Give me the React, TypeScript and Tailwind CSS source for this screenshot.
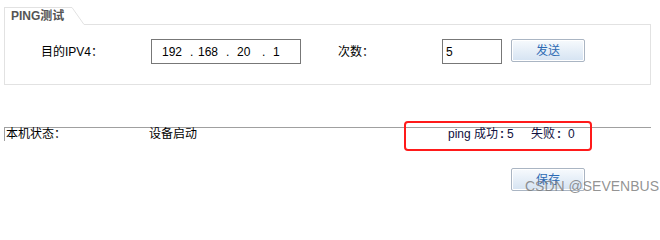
import React from "react";

const font = "font-['Liberation_Sans','Noto_Sans_CJK_SC',sans-serif]";

const App = () => {
  return (
    <div className={`relative w-[660px] h-[202px] bg-white text-[12px] text-black ${font}`}>
      {/* PING测试 panel */}
      <div className="ml-[4px] pt-[7px] w-[647px]">
        <div className="flex h-[18px]">
          <div className="w-[68px] border-l border-t border-[#e2e2e2] pl-[6px] pt-[2px] leading-[13px] font-bold text-[#555]">
            PING测试
          </div>
          <svg width="12" height="18" className="block">
            <line x1="0" y1="0.5" x2="12" y2="17.5" stroke="#e2e2e2" strokeWidth="1" />
          </svg>
          <div className="flex-1 border-b border-[#e2e2e2]" />
        </div>
        <div className="h-[60px] border-l border-r border-b border-[#e2e2e2] pt-[14px]">
          <div className="flex items-start">
            <div className="ml-[36px] w-[110px] h-[25px] flex items-center">目的IPV4：</div>
            <div className="w-[150px] h-[25px] border border-[#777] flex items-center pl-[10px]">
              <span className="w-[28px]">192</span>
              <span className="w-[8px]">.</span>
              <span className="w-[28px]">168</span>
              <span className="w-[11px]">.</span>
              <span className="w-[25px]">20</span>
              <span className="w-[11px]">.</span>
              <span>1</span>
            </div>
            <div className="ml-[37px] w-[104px] h-[25px] flex items-center">次数：</div>
            <div className="w-[60px] h-[25px] border border-[#777] flex items-center pl-[3px]">5</div>
            <button className="ml-[9px] w-[74px] h-[23px] border border-[#aab5c3] rounded-[2px] bg-gradient-to-b from-[#f7fafd] to-[#d5e3f2] text-[#2d6ab3] shadow-[inset_0_0_0_1px_#ffffff]">
              发送
            </button>
          </div>
        </div>
      </div>

      {/* 状态行 */}
      <div className="ml-[4px] mt-[42px] w-[647px] h-[14px] border-t border-l border-[#a0a0a0] flex leading-[13px] whitespace-nowrap">
        <div className="pl-[1px] w-[144px]">本机状态：</div>
        <div className="w-[299px]">设备启动</div>
        <div className="flex text-[#101040]">
          <span className="w-[52px]">ping 成功</span>
          <span className="w-[7px] font-bold">:</span>
          <span className="w-[24px]">5</span>
          <span className="w-[26px]">失败</span>
          <span className="w-[11px] font-bold">:</span>
          <span>0</span>
        </div>
      </div>

      {/* 保存 */}
      <div className="ml-[511px] mt-[27px]">
        <button className="w-[74px] h-[23px] border border-[#aab5c3] rounded-[2px] bg-gradient-to-b from-[#f7fafd] to-[#d5e3f2] text-[#2d6ab3] shadow-[inset_0_0_0_1px_#ffffff]">
          保存
        </button>
      </div>

      {/* 标注框 */}
      <div className="absolute left-[404px] top-[121px] w-[188px] h-[30px] border-[2px] border-[#ff1a1a] rounded-[4px]" />

      {/* 水印 */}
      <div className="absolute left-[525px] top-[178px] whitespace-nowrap text-[14px] leading-[16px] text-[#777]/80 font-['Liberation_Sans',sans-serif]">
        CSDN @SEVENBUS
      </div>
    </div>
  );
};

export default App;
